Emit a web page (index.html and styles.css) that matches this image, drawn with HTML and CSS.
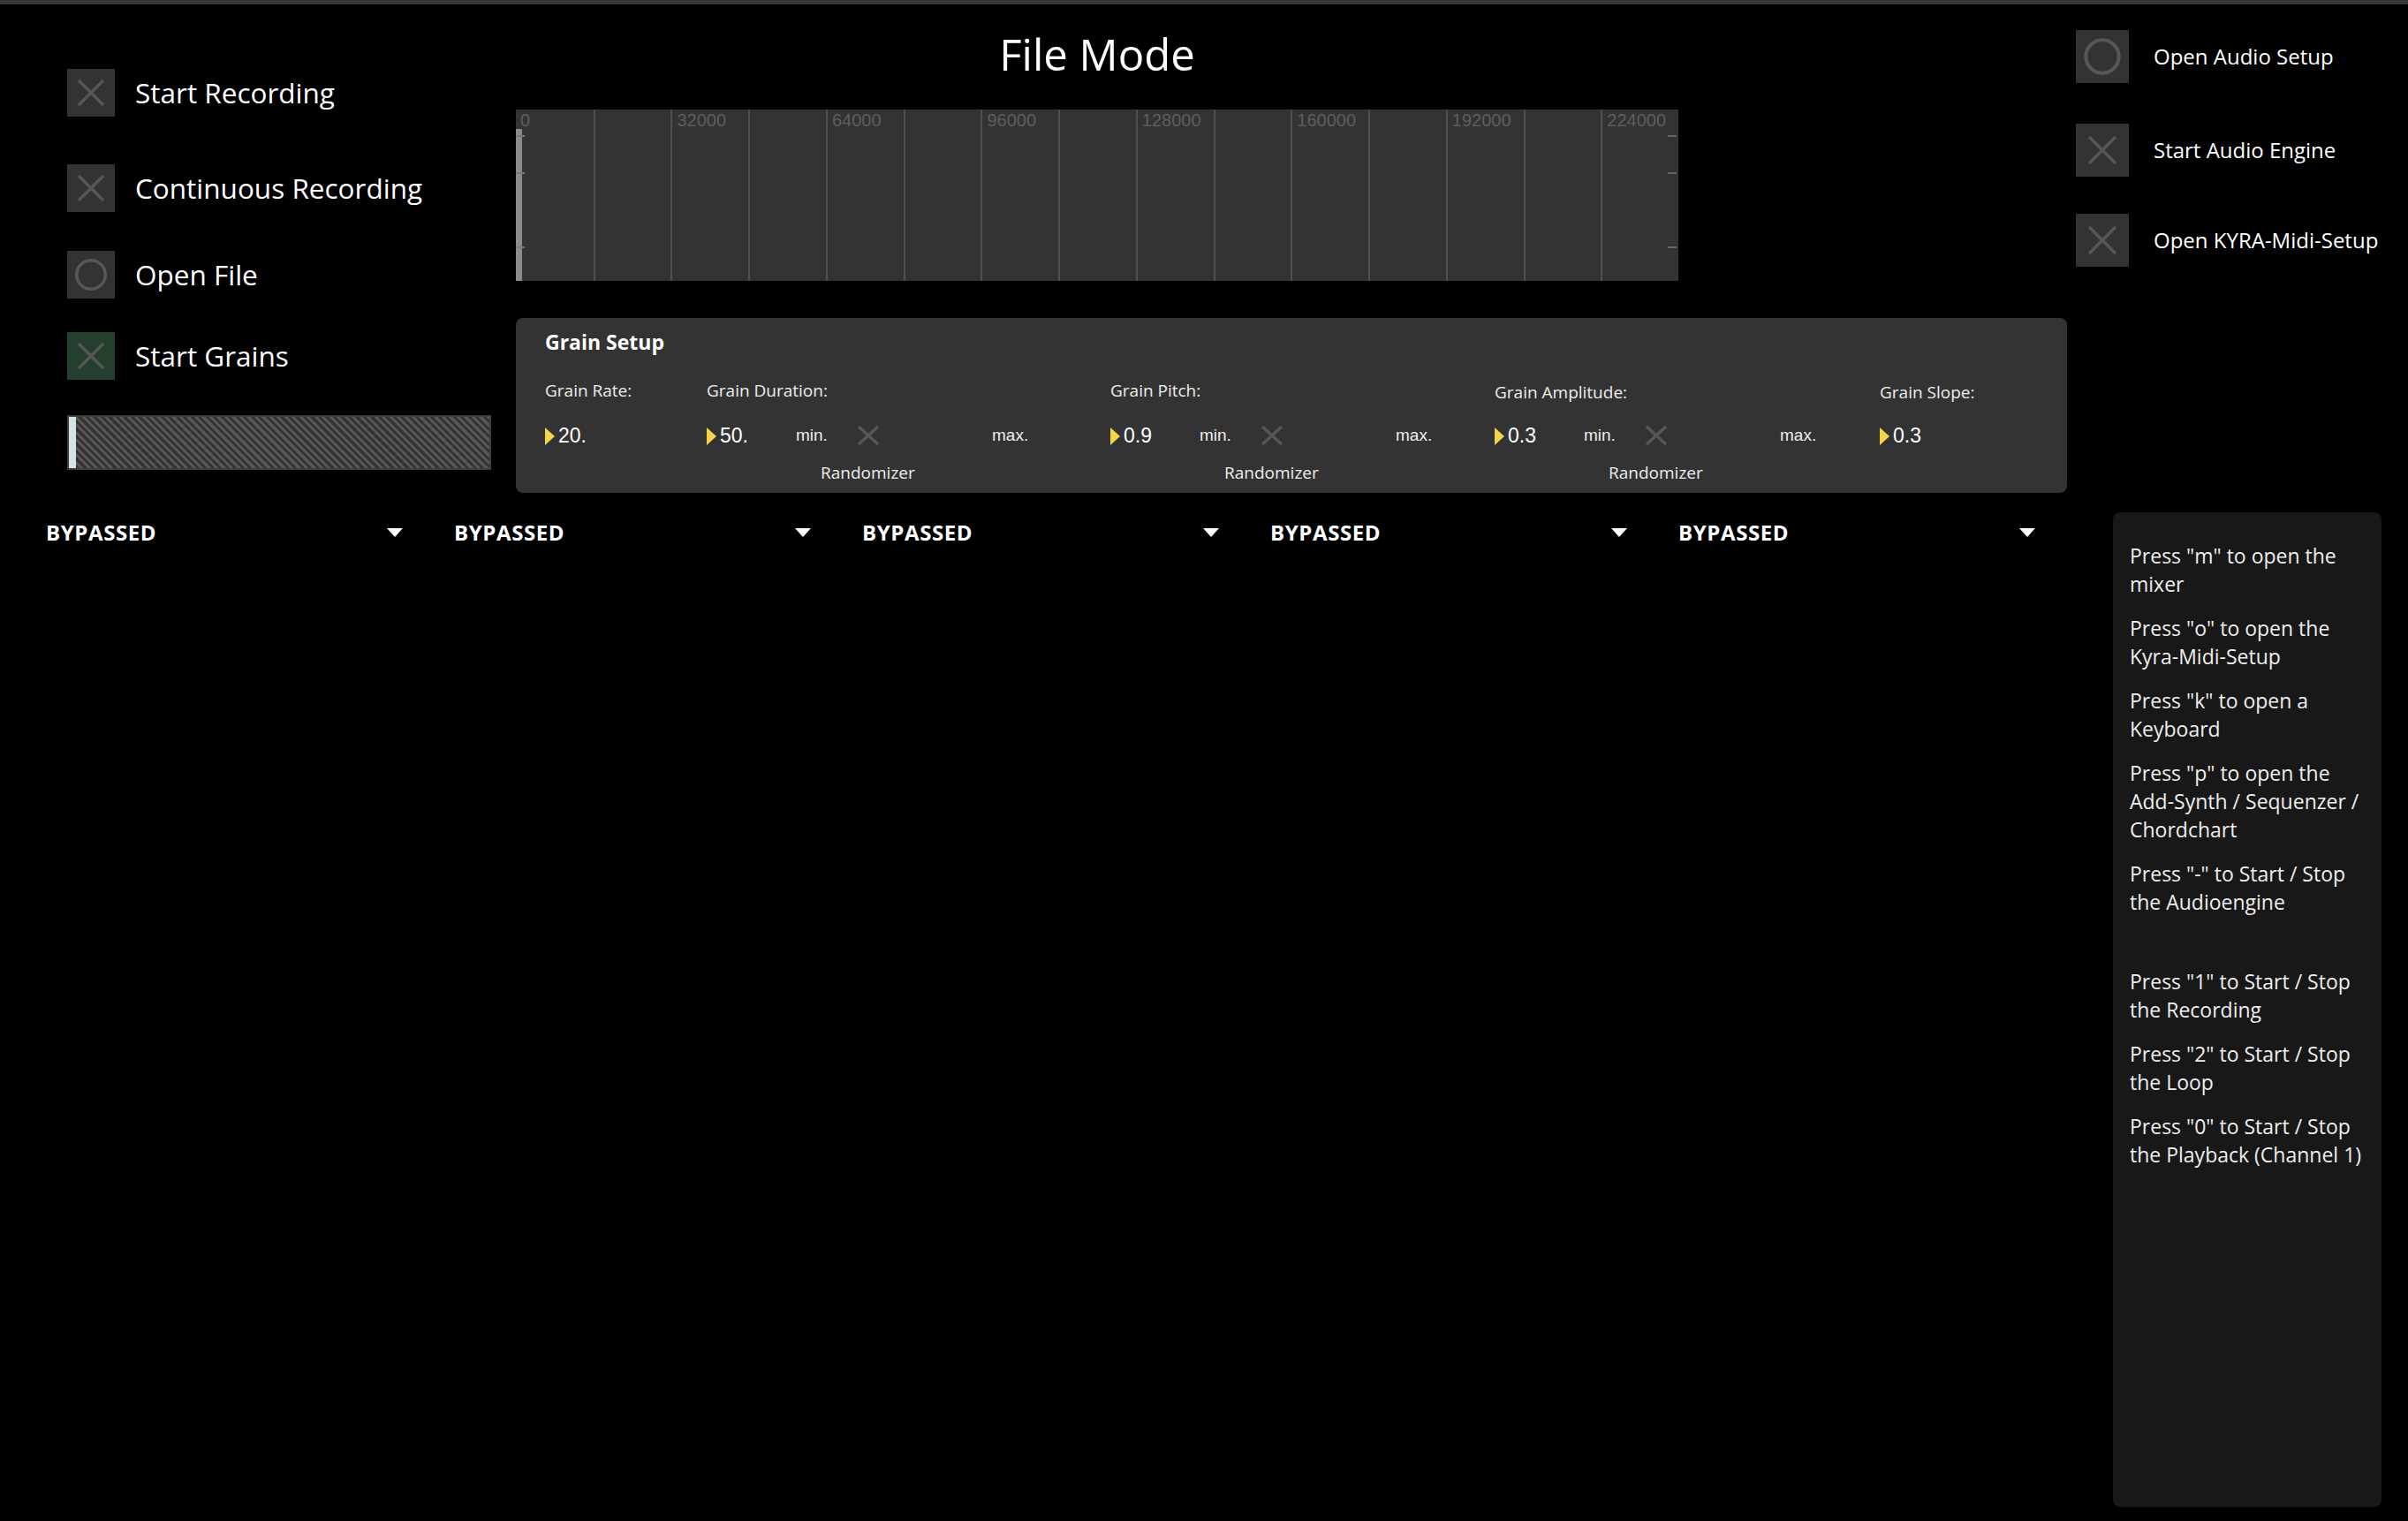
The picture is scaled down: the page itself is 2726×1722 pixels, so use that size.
FILE: index.html
```html
<!DOCTYPE html>
<html lang="en">
<head>
<meta charset="utf-8">
<title>File Mode</title>
<link rel="stylesheet" href="styles.css">
</head>
<body>
<div class="topband"></div>
<div class="top">
  <div class="leftcol">
    <div class="toggle">
      <span class="box"><svg width="54" height="54" viewBox="0 0 54 54"><path d="M13 13 L41 41 M41 13 L13 41" class="ico"/></svg></span>
      <span class="lbl">Start Recording</span>
    </div>
    <div class="toggle t2">
      <span class="box"><svg width="54" height="54" viewBox="0 0 54 54"><path d="M13 13 L41 41 M41 13 L13 41" class="ico"/></svg></span>
      <span class="lbl">Continuous Recording</span>
    </div>
    <div class="toggle t3">
      <span class="box"><svg width="54" height="54" viewBox="0 0 54 54"><circle cx="27" cy="27" r="16.3" class="ico"/></svg></span>
      <span class="lbl">Open File</span>
    </div>
    <div class="toggle t4">
      <span class="box green"><svg width="54" height="54" viewBox="0 0 54 54"><path d="M13 13 L41 41 M41 13 L13 41" class="ico"/></svg></span>
      <span class="lbl">Start Grains</span>
    </div>
    <div class="progress"><span class="marker"></span></div>
  </div>

  <div class="center">
    <h1 class="title">File Mode</h1>
    <div class="wave">
      <div class="col"><span class="wl">0</span></div>
      <div class="col"></div>
      <div class="col"><span class="wl">32000</span></div>
      <div class="col"></div>
      <div class="col"><span class="wl">64000</span></div>
      <div class="col"></div>
      <div class="col"><span class="wl">96000</span></div>
      <div class="col"></div>
      <div class="col"><span class="wl">128000</span></div>
      <div class="col"></div>
      <div class="col"><span class="wl">160000</span></div>
      <div class="col"></div>
      <div class="col"><span class="wl">192000</span></div>
      <div class="col"></div>
      <div class="col"><span class="wl">224000</span></div>
      <span class="lbar"></span>
      <span class="tick tl a"></span><span class="tick tl b"></span><span class="tick tl c"></span>
      <span class="tick tr a"></span><span class="tick tr b"></span><span class="tick tr c"></span>
    </div>

    <div class="grain">
      <div class="gtitle">Grain Setup</div>
      <div class="gfields">
        <div class="gf">
          <div class="gl">Grain Rate:</div>
          <div class="vrow"><span class="num"><span class="tri"></span>20.</span></div>
        </div>
        <div class="gf">
          <div class="gl">Grain Duration:</div>
          <div class="vrow">
            <span class="num"><span class="tri"></span>50.</span>
            <span class="mm min">min.</span>
            <svg class="xs" width="26" height="24" viewBox="0 0 26 24"><path d="M2 2 L24 22 M24 2 L2 22" class="ico"/></svg>
            <span class="mm max">max.</span>
          </div>
          <div class="rand">Randomizer</div>
        </div>
        <div class="gf">
          <div class="gl">Grain Pitch:</div>
          <div class="vrow">
            <span class="num"><span class="tri"></span>0.9</span>
            <span class="mm min">min.</span>
            <svg class="xs" width="26" height="24" viewBox="0 0 26 24"><path d="M2 2 L24 22 M24 2 L2 22" class="ico"/></svg>
            <span class="mm max">max.</span>
          </div>
          <div class="rand">Randomizer</div>
        </div>
        <div class="gf amp">
          <div class="gl">Grain Amplitude:</div>
          <div class="vrow">
            <span class="num"><span class="tri"></span>0.3</span>
            <span class="mm min">min.</span>
            <svg class="xs" width="26" height="24" viewBox="0 0 26 24"><path d="M2 2 L24 22 M24 2 L2 22" class="ico"/></svg>
            <span class="mm max">max.</span>
          </div>
          <div class="rand">Randomizer</div>
        </div>
        <div class="gf amp">
          <div class="gl">Grain Slope:</div>
          <div class="vrow"><span class="num"><span class="tri"></span>0.3</span></div>
        </div>
      </div>
    </div>
  </div>

  <div class="rightcol">
    <div class="rtoggle">
      <span class="rbox"><svg width="60" height="60" viewBox="0 0 60 60"><circle cx="30" cy="30" r="18.7" class="ico thick"/></svg></span>
      <span class="rlbl">Open Audio Setup</span>
    </div>
    <div class="rtoggle r2">
      <span class="rbox"><svg width="60" height="60" viewBox="0 0 60 60"><path d="M15 15 L45 45 M45 15 L15 45" class="ico"/></svg></span>
      <span class="rlbl">Start Audio Engine</span>
    </div>
    <div class="rtoggle r3">
      <span class="rbox"><svg width="60" height="60" viewBox="0 0 60 60"><path d="M15 15 L45 45 M45 15 L15 45" class="ico"/></svg></span>
      <span class="rlbl">Open KYRA-Midi-Setup</span>
    </div>
  </div>
</div>

<div class="bottom">
  <div class="bypass-row">
    <div class="bp"><span>BYPASSED</span><svg width="18" height="10" viewBox="0 0 18 10"><path d="M0 0 H18 L9 10 Z" fill="#fff"/></svg></div>
    <div class="bp"><span>BYPASSED</span><svg width="18" height="10" viewBox="0 0 18 10"><path d="M0 0 H18 L9 10 Z" fill="#fff"/></svg></div>
    <div class="bp"><span>BYPASSED</span><svg width="18" height="10" viewBox="0 0 18 10"><path d="M0 0 H18 L9 10 Z" fill="#fff"/></svg></div>
    <div class="bp"><span>BYPASSED</span><svg width="18" height="10" viewBox="0 0 18 10"><path d="M0 0 H18 L9 10 Z" fill="#fff"/></svg></div>
    <div class="bp"><span>BYPASSED</span><svg width="18" height="10" viewBox="0 0 18 10"><path d="M0 0 H18 L9 10 Z" fill="#fff"/></svg></div>
  </div>
  <div class="help">
    <p>Press "m" to open the<br>mixer</p>
    <p>Press "o" to open the<br>Kyra-Midi-Setup</p>
    <p>Press "k" to open a<br>Keyboard</p>
    <p>Press "p" to open the<br>Add-Synth / Sequenzer /<br>Chordchart</p>
    <p>Press "-" to Start / Stop<br>the Audioengine</p>
    <p class="gap">Press "1" to Start / Stop<br>the Recording</p>
    <p>Press "2" to Start / Stop<br>the Loop</p>
    <p>Press "0" to Start / Stop<br>the Playback (Channel 1)</p>
  </div>
</div>
</body>
</html>
```

FILE: styles.css
```css
* { box-sizing: border-box; }
html, body { margin: 0; padding: 0; background: #000; }
body {
  width: 2726px;
  height: 1722px;
  overflow: hidden;
  font-family: "Open Sans", "Lato", sans-serif;
  color: #fff;
}
.topband { height: 5px; background: #363636; }

.top { display: flex; height: 575px; }

/* left column */
.leftcol {
  flex: 0 0 584px;
  padding: 73px 0 0 76px;
  display: flex;
  flex-direction: column;
  align-items: flex-start;
}
.toggle { display: flex; align-items: center; gap: 23px; }
.box { width: 54px; height: 54px; background: #333; display: flex; }
.box.green { background: #243f2d; }
.box svg, .rbox svg { display: block; }
.ico { stroke: #575757; stroke-width: 3.5; fill: none; }
.ico.thick { stroke-width: 4; }
.lbl { font-size: 31.5px; line-height: 32px; white-space: nowrap; }
.t2 { margin-top: 54px; }
.t3 { margin-top: 44px; }
.t4 { margin-top: 38px; }
.progress {
  margin-top: 40px;
  width: 480px;
  height: 62px;
  border: 2px solid #3f3f3f;
  background: repeating-linear-gradient(45deg, #333 0 3px, #575757 3px 6px);
  display: flex;
}
.marker { width: 8px; background: #d3e4ea; }

/* center */
.center { flex: 0 0 1756px; display: flex; flex-direction: column; }
.title {
  margin: 31.5px 0 0;
  width: 1316px;
  text-align: center;
  font-size: 49px;
  line-height: 49px;
  font-weight: 400;
}
.wave {
  margin-top: 38.5px;
  width: 1316px;
  height: 194px;
  background: #333;
  position: relative;
  display: grid;
  grid-template-columns: repeat(15, 1fr);
}
.col { border-left: 2px solid #505050; }
.col:first-child { border-left: 0; }
.wl {
  display: block;
  margin-top: 2px;
  padding-left: 5px;
  font-family: "Liberation Sans", Arial, sans-serif;
  font-size: 20px;
  line-height: 20px;
  color: #5e5e5e;
}
.lbar { position: absolute; left: 0; top: 22px; bottom: 0; width: 7px; background: #8b8b8b; }
.tick { position: absolute; width: 10px; height: 2px; }
.tick.tl { left: 0; background: #7a7a7a; }
.tick.tr { right: 2px; background: #666; }
.tick.a { top: 29px; }
.tick.b { top: 71px; }
.tick.c { top: 155px; }

.grain {
  margin-top: 42px;
  width: 1756px;
  height: 198px;
  background: #333;
  border-radius: 8px;
  padding: 15.6px 0 0 33px;
}
.gtitle { font-size: 23px; line-height: 23px; font-weight: 700; }
.gfields {
  display: grid;
  grid-template-columns: 183px 457px 435px 436px auto;
  margin-top: 34.4px;
}
.gf { display: flex; flex-direction: column; align-items: flex-start; }
.gl { font-size: 19px; line-height: 19px; color: #eee; white-space: nowrap; }
.gf.amp .gl { margin-top: 2px; margin-bottom: -2px; }
.vrow { display: flex; align-items: center; height: 23px; margin-top: 30.5px; }
.num {
  display: flex;
  align-items: center;
  width: 101px;
  font-family: "Liberation Sans", Arial, sans-serif;
  font-size: 23px;
  line-height: 23px;
}
.tri {
  width: 0;
  height: 0;
  border-top: 10.5px solid transparent;
  border-bottom: 10.5px solid transparent;
  border-left: 11px solid #f4d548;
  margin-right: 4px;
}
.mm {
  font-family: "Liberation Sans", Arial, sans-serif;
  font-size: 19px;
  line-height: 19px;
  color: #eee;
  margin-top: -3px;
}
.min { width: 69px; }
.xs { display: block; margin-top: -2px; }
.max { margin-left: 127px; }
.rand { margin: 20.5px 0 0 129px; font-size: 19px; line-height: 19px; color: #eee; white-space: nowrap; }

/* right column */
.rightcol { padding: 29px 0 0 10px; display: flex; flex-direction: column; }
.rtoggle { display: flex; align-items: center; gap: 28px; }
.rbox { width: 60px; height: 60px; background: #333; display: flex; }
.rlbl { font-size: 24px; line-height: 24px; white-space: nowrap; }
.r2 { margin-top: 46px; }
.r3 { margin-top: 42px; }

/* bottom */
.bottom { display: flex; }
.bypass-row {
  flex: 0 0 2392px;
  align-self: flex-start;
  display: grid;
  grid-template-columns: repeat(5, 404px);
  column-gap: 58px;
  padding: 10.8px 0 0 52px;
}
.bp {
  display: flex;
  justify-content: space-between;
  align-items: center;
  font-weight: 700;
  font-size: 24px;
  line-height: 24px;
  letter-spacing: 0.6px;
}
.help {
  flex: 0 0 304px;
  height: 1126px;
  background: #181818;
  border-radius: 8px;
  padding: 32.7px 8px 0 19px;
}
.help p {
  margin: 0 0 18px;
  font-size: 23px;
  line-height: 32px;
  color: #eee;
  white-space: nowrap;
}
.help p.gap { margin-top: 58px; }
```
